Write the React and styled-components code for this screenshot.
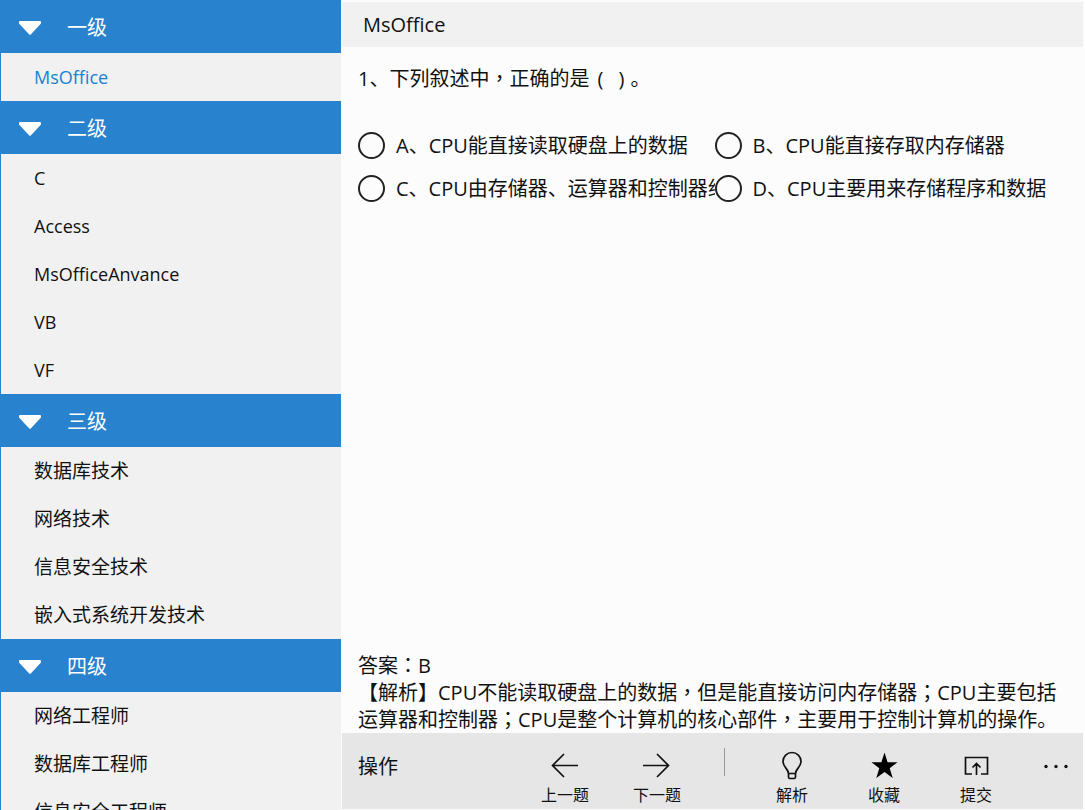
import React, { useState } from "react";
import styled, { createGlobalStyle } from "styled-components";

const GlobalStyle = createGlobalStyle`
  * {
    box-sizing: border-box;
  }
  body {
    margin: 0;
    background: #fcfcfc;
    color: #111;
    font-family: "Open Sans", "Noto Sans CJK SC", sans-serif;
    font-size: 20px;
    line-height: 27px;
  }
  button, input {
    margin: 0;
    font: inherit;
    color: inherit;
  }
`;

const Page = styled.div`
  display: flex;
  height: 100vh;
  overflow: hidden;
`;

const Sidebar = styled.nav`
  flex: 0 0 341px;
  overflow: hidden;
  background: #f1f1f1;
  border-left: 1px solid #2882cd;
`;

const GroupButton = styled.button`
  display: flex;
  align-items: center;
  gap: 26px;
  width: 100%;
  height: 53px;
  padding: 2px 0 0 18px;
  border: 0;
  background: #2882cd;
  color: #fff;
  text-align: left;
  cursor: pointer;
`;

const Triangle = styled.svg`
  width: 22px;
  height: 14px;
  fill: #fff;
  transform: ${(props) => (props.$open ? "none" : "rotate(-90deg)")};
`;

const List = styled.ul`
  list-style: none;
  margin: 0;
  padding: 0;
  font-size: ${(props) => (props.$latin ? "18px" : "19px")};
`;

const ItemLink = styled.a`
  display: flex;
  align-items: center;
  height: 48px;
  padding: 0 0 0 33px;
  color: ${(props) => (props.$active ? "#1583d3" : "#111")};
  text-decoration: none;
`;

const Main = styled.main`
  flex: 1;
  min-width: 0;
  display: flex;
  flex-direction: column;
  padding: 2px 2px 1px 1px;
`;

const Title = styled.h1`
  margin: 0;
  padding: 9px 21px;
  background: #f1f1f1;
  font-size: 20px;
  font-weight: 400;
`;

const Content = styled.section`
  flex: 1;
  display: flex;
  flex-direction: column;
  padding: 18px 12px 0 16px;
`;

const Question = styled.p`
  margin: 0 0 32px;
`;

const Blank = styled.span`
  display: inline-flex;
  justify-content: space-between;
  width: 41px;
  padding: 0 6px 0 8px;
`;

const Options = styled.div`
  display: grid;
  grid-template-columns: 1fr 1fr;
`;

const Option = styled.label`
  display: flex;
  align-items: center;
  gap: 11px;
  height: 43px;
  overflow: hidden;
  white-space: nowrap;
  cursor: pointer;
`;

const Radio = styled.input`
  appearance: none;
  flex: none;
  width: 27px;
  height: 27px;
  border: 2px solid #222;
  border-radius: 50%;
  &:checked {
    background: radial-gradient(#222 0 6px, transparent 7px);
  }
`;

const Answer = styled.div`
  margin-top: auto;
  p {
    margin: 0;
  }
`;

// full-width marks that sit in the middle of their cell
const Mark = styled.span`
  font-family: "Noto Sans CJK TC", sans-serif;
  line-height: 1;
`;

const CommandBar = styled.footer`
  display: flex;
  height: 76px;
  background: #e6e6e6;
`;

const BarTitle = styled.span`
  flex: 1;
  padding: 20px 0 0 16px;
`;

const BarButton = styled.button`
  display: flex;
  flex-direction: column;
  align-items: center;
  width: 92px;
  padding: 17px 0 0;
  border: 0;
  background: none;
  font-size: 16px;
  cursor: pointer;
  svg {
    flex: none;
    width: 32px;
    height: 32px;
    fill: none;
    stroke: #111;
    stroke-width: 1.7;
  }
`;

const MoreButton = styled(BarButton)`
  width: 61px;
  padding-left: 6px;
`;

const Separator = styled.span`
  width: 1px;
  height: 28px;
  margin: 15px 21px 0;
  background: #999;
`;

const groups = [
  { name: "一级", latin: true, items: ["MsOffice"] },
  { name: "二级", latin: true, items: ["C", "Access", "MsOfficeAnvance", "VB", "VF"] },
  { name: "三级", items: ["数据库技术", "网络技术", "信息安全技术", "嵌入式系统开发技术"] },
  { name: "四级", items: ["网络工程师", "数据库工程师", "信息安全工程师"] },
];

const options = [
  { key: "A", text: "CPU能直接读取硬盘上的数据" },
  { key: "B", text: "CPU能直接存取内存储器" },
  { key: "C", text: "CPU由存储器、运算器和控制器组成" },
  { key: "D", text: "CPU主要用来存储程序和数据" },
];

const Marked = ({ children }) =>
  children.split(/([，：；])/).map((part, i) => (i % 2 ? <Mark key={i}>{part}</Mark> : part));

const Group = ({ group, selected, onSelect }) => {
  const [open, setOpen] = useState(true);
  return (
    <>
      <GroupButton aria-expanded={open} onClick={() => setOpen(!open)}>
        <Triangle $open={open} viewBox="0 0 22 14">
          <path d="M1 0H21Q22 0 22 1V2.500L12 13.300Q11 14.400 10 13.300L0 2.500V1Q0 0 1 0Z" />
        </Triangle>
        {group.name}
      </GroupButton>
      {open && (
        <List $latin={group.latin}>
          {group.items.map((item) => (
            <li key={item}>
              <ItemLink href="#" $active={item === selected} onClick={() => onSelect(item)}>
                {item}
              </ItemLink>
            </li>
          ))}
        </List>
      )}
    </>
  );
};

const App = () => {
  const [selected, setSelected] = useState("MsOffice");
  return (
    <>
      <GlobalStyle />
      <Page>
        <Sidebar>
          {groups.map((group) => (
            <Group key={group.name} group={group} selected={selected} onSelect={setSelected} />
          ))}
        </Sidebar>
        <Main>
          <Title>{selected}</Title>
          <Content>
            <Question>
              <Marked>1、下列叙述中，正确的是</Marked>
              <Blank>
                <span>(</span> <span>)</span>
              </Blank>
              。
            </Question>
            <Options>
              {options.map((option) => (
                <Option key={option.key}>
                  <Radio type="radio" name="answer" value={option.key} />
                  {option.key}、{option.text}
                </Option>
              ))}
            </Options>
            <Answer>
              <p>
                <Marked>答案：B</Marked>
              </p>
              <p>
                <Marked>
                  【解析】CPU不能读取硬盘上的数据，但是能直接访问内存储器；CPU主要包括运算器和控制器；CPU是整个计算机的核心部件，主要用于控制计算机的操作。
                </Marked>
              </p>
            </Answer>
          </Content>
          <CommandBar>
            <BarTitle>操作</BarTitle>
            <BarButton>
              <svg viewBox="0 0 32 32">
                <path d="M29 15.500H3.500M15 4L3.500 15.500L15 27" />
              </svg>
              上一题
            </BarButton>
            <BarButton>
              <svg viewBox="0 0 32 32">
                <path d="M2 15.500H27.500M16 4L27.500 15.500L16 27" />
              </svg>
              下一题
            </BarButton>
            <Separator />
            <BarButton>
              <svg viewBox="0 0 32 32">
                <path d="M12.500 23.500C12.500 19 7 17 7 11.500A9 9 0 0 1 25 11.500C25 17 19.500 19 19.500 23.500ZM12.500 23.500V27Q12.500 28.500 14 28.500H18Q19.500 28.500 19.500 27V23.500" />
              </svg>
              解析
            </BarButton>
            <BarButton>
              <svg viewBox="0 0 32 32">
                <path
                  d="M16.500 2.500L19.600 12.300H29.500L21.700 18.300L24.700 28L16.500 22L8.300 28L11.300 18.300L3.500 12.300H13.400Z"
                  fill="#000"
                  stroke="none"
                />
              </svg>
              收藏
            </BarButton>
            <BarButton>
              <svg viewBox="0 0 32 32">
                <path d="M12 24H5.500V7.500H27.500V24H21M16.500 25V13.500M12.500 17.500L16.500 13.500L20.500 17.500" />
              </svg>
              提交
            </BarButton>
            <MoreButton aria-label="更多">
              <svg viewBox="0 0 32 32">
                <g fill="#111" stroke="none">
                  <circle cx="6" cy="16.500" r="1.700" />
                  <circle cx="16" cy="16.500" r="1.700" />
                  <circle cx="26" cy="16.500" r="1.700" />
                </g>
              </svg>
            </MoreButton>
          </CommandBar>
        </Main>
      </Page>
    </>
  );
};

export default App;
